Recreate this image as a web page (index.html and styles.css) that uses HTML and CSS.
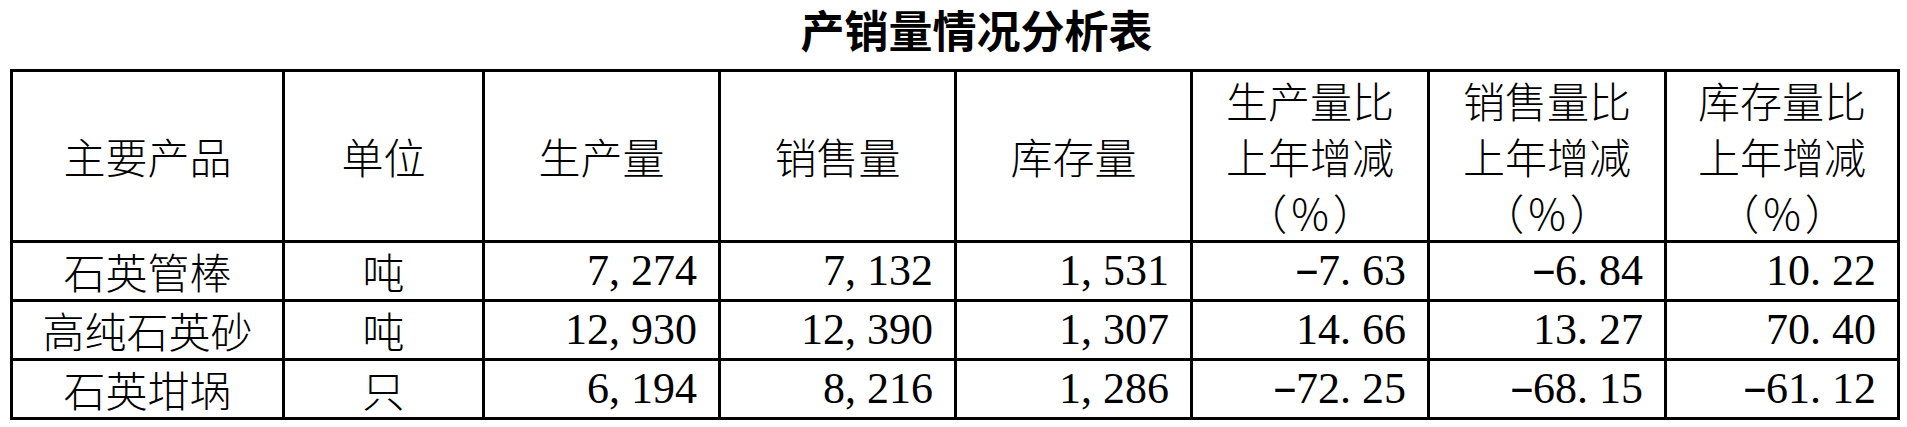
FILE: index.html
```html
<!DOCTYPE html>
<html lang="zh-CN">
<head>
<meta charset="utf-8">
<title>产销量情况分析表</title>
<link rel="stylesheet" href="styles.css">
</head>
<body>
<div class="page">
  <h1 class="title">产销量情况分析表</h1>
  <table class="sheet">
    <colgroup>
      <col class="c-name">
      <col class="c-unit">
      <col class="c-num">
      <col class="c-num">
      <col class="c-num">
      <col class="c-pct">
      <col class="c-pct">
      <col class="c-pct2">
    </colgroup>
    <thead>
      <tr class="head">
        <th>主要产品</th>
        <th>单位</th>
        <th>生产量</th>
        <th>销售量</th>
        <th>库存量</th>
        <th>生产量比<br>上年增减<br>（<span class="pc">%</span>）</th>
        <th>销售量比<br>上年增减<br>（<span class="pc">%</span>）</th>
        <th>库存量比<br>上年增减<br>（<span class="pc">%</span>）</th>
      </tr>
    </thead>
    <tbody>
      <tr>
        <td class="txt">石英管棒</td>
        <td class="txt">吨</td>
        <td class="num">7<span class="sep">,</span>274</td>
        <td class="num">7<span class="sep">,</span>132</td>
        <td class="num">1<span class="sep">,</span>531</td>
        <td class="num"><span class="neg">-</span>7<span class="sep">.</span>63</td>
        <td class="num"><span class="neg">-</span>6<span class="sep">.</span>84</td>
        <td class="num">10<span class="sep">.</span>22</td>
      </tr>
      <tr>
        <td class="txt">高纯石英砂</td>
        <td class="txt">吨</td>
        <td class="num">12<span class="sep">,</span>930</td>
        <td class="num">12<span class="sep">,</span>390</td>
        <td class="num">1<span class="sep">,</span>307</td>
        <td class="num">14<span class="sep">.</span>66</td>
        <td class="num">13<span class="sep">.</span>27</td>
        <td class="num">70<span class="sep">.</span>40</td>
      </tr>
      <tr>
        <td class="txt">石英坩埚</td>
        <td class="txt">只</td>
        <td class="num">6<span class="sep">,</span>194</td>
        <td class="num">8<span class="sep">,</span>216</td>
        <td class="num">1<span class="sep">,</span>286</td>
        <td class="num"><span class="neg">-</span>72<span class="sep">.</span>25</td>
        <td class="num"><span class="neg">-</span>68<span class="sep">.</span>15</td>
        <td class="num"><span class="neg">-</span>61<span class="sep">.</span>12</td>
      </tr>
    </tbody>
  </table>
</div>
</body>
</html>
```

FILE: styles.css
```css
html, body {
  margin: 0;
  padding: 0;
  background: #ffffff;
}

.page {
  padding: 0 10px;
  color: #000000;
  font-family: "Noto Sans CJK SC", "Noto Sans CJK JP", sans-serif;
}

.title {
  margin: 0;
  height: 69px;
  padding-left: 46px;
  font-size: 44px;
  line-height: 58px;
  font-weight: 700;
  text-align: center;
  letter-spacing: 0;
}

.sheet {
  width: 1887px;
  border-collapse: collapse;
  table-layout: fixed;
  border: 3px solid #000;
}

.c-name { width: 272px; }
.c-unit { width: 200px; }
.c-num { width: 236px; }
.c-pct { width: 237px; }
.c-pct2 { width: 233px; }

.sheet th,
.sheet td {
  border: 3px solid #000;
  padding: 0;
  font-size: 42px;
  font-weight: 300;
  line-height: 56px;
  vertical-align: middle;
}

.sheet .head th {
  height: 168px;
  text-align: center;
}

.sheet td {
  height: 56px;
}

.sheet .txt {
  text-align: center;
}

.sheet .num {
  text-align: right;
  padding-right: 21px;
  font-family: "Liberation Serif", "Times New Roman", serif;
  font-size: 44px;
  font-weight: 400;
}

.sep {
  margin-right: 0.25em;
}

.neg {
  display: inline-block;
  width: 0.5em;
  text-align: center;
  transform: scaleX(1.7) translateY(-2px);
}

.pc {
  margin: 0 4px;
}
```
